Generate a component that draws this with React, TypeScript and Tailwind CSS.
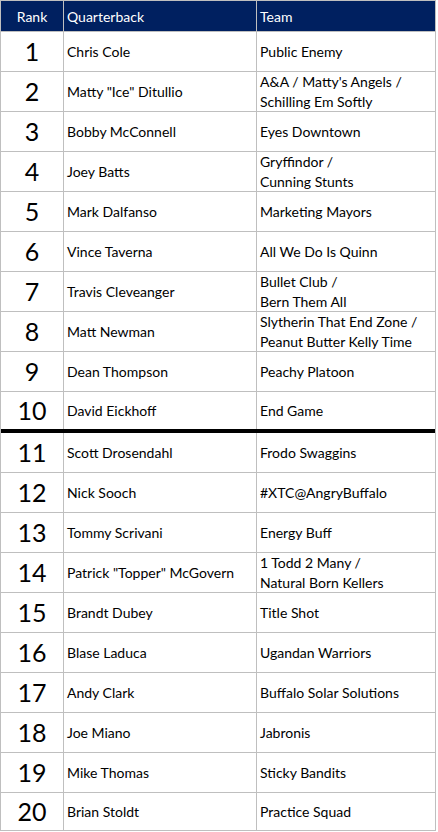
const rows: { qb: string; team: string[] }[] = [
  { qb: 'Chris Cole', team: ['Public Enemy'] },
  { qb: 'Matty "Ice" Ditullio', team: ["A&A / Matty's Angels /", 'Schilling Em Softly'] },
  { qb: 'Bobby McConnell', team: ['Eyes Downtown'] },
  { qb: 'Joey Batts', team: ['Gryffindor /', 'Cunning Stunts'] },
  { qb: 'Mark Dalfanso', team: ['Marketing Mayors'] },
  { qb: 'Vince Taverna', team: ['All We Do Is Quinn'] },
  { qb: 'Travis Cleveanger', team: ['Bullet Club /', 'Bern Them All'] },
  { qb: 'Matt Newman', team: ['Slytherin That End Zone /', 'Peanut Butter Kelly Time'] },
  { qb: 'Dean Thompson', team: ['Peachy Platoon'] },
  { qb: 'David Eickhoff', team: ['End Game'] },
  { qb: 'Scott Drosendahl', team: ['Frodo Swaggins'] },
  { qb: 'Nick Sooch', team: ['#XTC@AngryBuffalo'] },
  { qb: 'Tommy Scrivani', team: ['Energy Buff'] },
  { qb: 'Patrick "Topper" McGovern', team: ['1 Todd 2 Many /', 'Natural Born Kellers'] },
  { qb: 'Brandt Dubey', team: ['Title Shot'] },
  { qb: 'Blase Laduca', team: ['Ugandan Warriors'] },
  { qb: 'Andy Clark', team: ['Buffalo Solar Solutions'] },
  { qb: 'Joe Miano', team: ['Jabronis'] },
  { qb: 'Mike Thomas', team: ['Sticky Bandits'] },
  { qb: 'Brian Stoldt', team: ['Practice Squad'] },
];

// row 10 gets the thick cut line, last row is a touch shorter
const rowClass = (i: number) => {
  if (i === 9) return 'h-[41px] border-b-[4px] border-black';
  if (i === 19) return 'h-[38px] border-b border-[#bfbfbf]';
  return 'h-[40px] border-b border-[#bfbfbf]';
};

export default function App() {
  return (
    <div className="w-[438px] h-[832px] bg-white" style={{ fontFamily: 'Lato, "Open Sans", sans-serif' }}>
      <div className="w-[436px] border-l border-r border-t border-[#bfbfbf]">
        <div className="flex h-[31px] bg-[#002060] text-white text-[14px] border-b border-[#bfbfbf]">
          <div className="w-[63px] flex items-center justify-center border-r border-[#bfbfbf]">Rank</div>
          <div className="w-[193px] flex items-center pl-[3px] border-r border-[#bfbfbf]">Quarterback</div>
          <div className="flex-1 flex items-center pl-[3px]">Team</div>
        </div>
        {rows.map((r, i) => (
          <div key={i} className={`flex text-black ${rowClass(i)}`}>
            <div className="w-[63px] flex items-center justify-center border-r border-[#bfbfbf] text-[25px]">
              {i + 1}
            </div>
            <div className="w-[193px] flex items-center pl-[3px] border-r border-[#bfbfbf] text-[14px]">{r.qb}</div>
            <div className="flex-1 flex flex-col justify-center pl-[3px] text-[14px] leading-[20px]">
              {r.team.map((t) => (
                <span key={t}>{t}</span>
              ))}
            </div>
          </div>
        ))}
      </div>
    </div>
  );
}
